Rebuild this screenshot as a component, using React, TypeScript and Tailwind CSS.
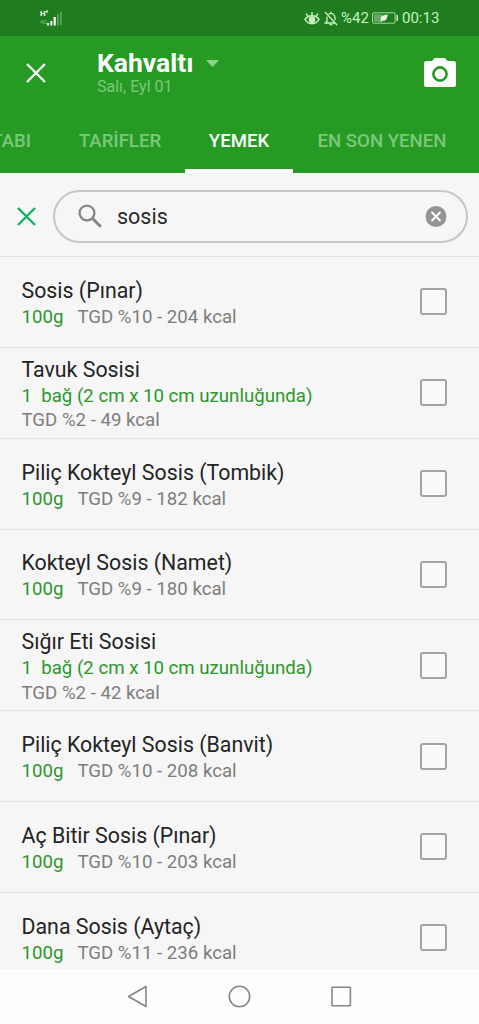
const foods = [
  { name: "Sosis (Pınar)", amount: "100g", info: "TGD %10 - 204 kcal" },
  {
    name: "Tavuk Sosisi",
    amount: "1  bağ (2 cm x 10 cm uzunluğunda)",
    info: "TGD %2 - 49 kcal",
    long: true,
  },
  {
    name: "Piliç Kokteyl Sosis (Tombik)",
    amount: "100g",
    info: "TGD %9 - 182 kcal",
  },
  {
    name: "Kokteyl Sosis (Namet)",
    amount: "100g",
    info: "TGD %9 - 180 kcal",
  },
  {
    name: "Sığır Eti Sosisi",
    amount: "1  bağ (2 cm x 10 cm uzunluğunda)",
    info: "TGD %2 - 42 kcal",
    long: true,
  },
  {
    name: "Piliç Kokteyl Sosis (Banvit)",
    amount: "100g",
    info: "TGD %10 - 208 kcal",
  },
  {
    name: "Aç Bitir Sosis (Pınar)",
    amount: "100g",
    info: "TGD %10 - 203 kcal",
  },
  {
    name: "Dana Sosis (Aytaç)",
    amount: "100g",
    info: "TGD %11 - 236 kcal",
  },
];

function StatusBar() {
  return (
    <div className="flex h-9 shrink-0 items-center justify-between bg-[#1f7d1f] pl-10 pr-[39px] text-[#c8f0c4]">
      <div className="flex h-4 w-6">
        <div className="flex w-[7px] flex-col text-[8px] leading-[8px] font-bold tracking-[-0.5px]">
          <span className="text-white">H⁺</span>
          <span className="text-[6px] opacity-40">4G</span>
        </div>
        <svg className="h-4 w-[15px]" viewBox="0 0 15 16" fill="currentColor">
          <path d="M0 13h2v2.500H0z" />
          <path d="M3.3 11h2v4.500h-2z" fill="#fff" />
          <path d="M6.600 7h2.200v8.500H6.600z" fill="#fff" />
          <path d="M10 4h1.800v11.500H10zM13 2h1.800v13.500H13z" opacity="0.35" />
        </svg>
      </div>
      <div className="flex items-center text-[15px]">
        <svg
          className="h-[15px] w-4"
          viewBox="0 0 16 15"
          fill="none"
          stroke="currentColor"
          strokeWidth="1.500"
        >
          <path d="M1 8.500C4 3.500 12 3.500 15 8.500C12 14 4 14 1 8.500z" />
          <circle cx="8" cy="8.700" r="2.600" fill="currentColor" />
          <path d="M8 4.500V1M4 5.200L2 2.600M12 5.200l2-2.600" />
        </svg>
        <svg
          className="ml-1 h-[15px] w-[14px]"
          viewBox="0 0 14 15"
          fill="none"
          stroke="currentColor"
          strokeWidth="1.300"
        >
          <path d="M4.500 3.200C8 1 11 3.500 11 7v2.200M3 5.500v4.800L1.300 12H11M5.500 13.700h3M7 2.300V.7M1 1l12 13" />
        </svg>
        <span className="ml-[3px] w-7 whitespace-nowrap">%42</span>
        <svg className="ml-[3px] h-3 w-[27px]" viewBox="0 0 27 12" fill="none">
          <rect
            x="0.600"
            y="0.800"
            width="22.500"
            height="10.400"
            rx="1"
            stroke="currentColor"
            strokeOpacity="0.8"
          />
          <path d="M2 2.200h8.500v7.600H2z" fill="currentColor" opacity="0.4" />
          <path
            d="M15.800 2.400C11 2.700 8 4.300 9 7.300L8.200 9.600h1.300l.7-1.200c3.500 1.400 5-1.800 5.600-6z"
            fill="#e6fbe2"
          />
          <path d="M24.500 3h1.500v6h-1.500z" fill="currentColor" />
        </svg>
        <span className="ml-[3px] w-[38px] whitespace-nowrap">00:13</span>
      </div>
    </div>
  );
}

function Header() {
  return (
    <div className="flex h-[137px] shrink-0 flex-col bg-[#259b24] text-white">
      <div className="flex h-[73px] items-center pl-[26px] pr-[22px]">
        <svg
          className="h-5 w-5"
          viewBox="0 0 20 20"
          stroke="currentColor"
          strokeWidth="2.300"
        >
          <path d="M1 1l18 18M19 1L1 19" />
        </svg>
        <div className="ml-[51px] flex flex-col pb-0.5">
          <div className="flex h-[30px] items-center">
            <span className="text-[26.500px] leading-[30px] font-bold">
              Kahvaltı
            </span>
            <svg
              className="ml-3 h-[7px] w-[13px]"
              viewBox="0 0 13 7"
              fill="#8fd28e"
            >
              <path d="M0 0h13L6.500 7z" />
            </svg>
          </div>
          <span className="text-[16px] leading-[17px] text-[#7cc87b]">
            Salı, Eyl 01
          </span>
        </div>
        <svg
          className="ml-auto h-[31px] w-[34px]"
          viewBox="0 0 34 31"
          fill="none"
        >
          <path
            d="M3.500 4H9l2.800-3h10L24.600 4h5.900a2.500 2.500 0 0 1 2.500 2.500v21a2.500 2.500 0 0 1-2.500 2.500h-27A2.500 2.500 0 0 1 1 27.500v-21A2.500 2.500 0 0 1 3.500 4z"
            fill="#fff"
          />
          <circle cx="17" cy="17" r="6.600" stroke="#259b24" strokeWidth="2.600" />
        </svg>
      </div>
      <div className="flex h-16 overflow-hidden text-[18.600px] font-medium text-[#7cc87b]">
        <div className="flex w-[55px] shrink-0 items-center justify-end pt-0.5 pr-6">
          TABI
        </div>
        <div className="flex w-[130px] shrink-0 items-center justify-center pt-0.5">
          TARİFLER
        </div>
        <div className="flex w-[108px] shrink-0 items-center justify-center border-b-4 border-white pt-1.5 text-white">
          YEMEK
        </div>
        <div className="flex w-[178px] shrink-0 items-center justify-center pt-0.5">
          EN SON YENEN
        </div>
      </div>
    </div>
  );
}

function SearchBar() {
  return (
    <div className="flex h-[84px] shrink-0 items-center border-b border-[#e2e3e4] pt-[3px] pr-[11px] pl-[17px]">
      <svg
        className="h-[19px] w-[19px]"
        viewBox="0 0 19 19"
        stroke="#17b060"
        strokeWidth="2.400"
      >
        <path d="M1 1l17 17M18 1L1 18" />
      </svg>
      <div className="ml-[17px] flex h-[53px] flex-1 items-center rounded-full border-2 border-[#c4c6c8] pr-[19px] pl-[23px]">
        <svg
          className="h-6 w-6"
          viewBox="0 0 24 24"
          fill="none"
          stroke="#858585"
        >
          <circle cx="9" cy="9" r="7.400" strokeWidth="2.300" />
          <path d="M14.300 14.300l8.500 8.500" strokeWidth="3" />
        </svg>
        <span className="ml-[15px] pt-0.5 text-[21.500px] text-[#2b2b2b]">
          sosis
        </span>
        <svg className="ml-auto h-[22px] w-[22px]" viewBox="0 0 22 22">
          <circle cx="11" cy="11.500" r="10.500" fill="#939393" />
          <path
            d="M6.500 7l9 9M15.500 7l-9 9"
            stroke="#fff"
            strokeWidth="2"
          />
        </svg>
      </div>
    </div>
  );
}

function NavBar() {
  return (
    <div className="flex h-[55px] shrink-0 items-center bg-[#fdfdfd]">
      <svg
        className="mx-auto h-6 w-[226px]"
        viewBox="0 0 226 24"
        fill="none"
        stroke="#858585"
        strokeWidth="1.600"
        strokeLinejoin="round"
      >
        <path d="M1.500 11.500L19 1.500v20z" />
        <circle cx="112.500" cy="11.500" r="10.200" />
        <rect x="205" y="2.300" width="18.400" height="18.400" rx="0.500" />
      </svg>
    </div>
  );
}

export default function App() {
  return (
    <div className="flex h-screen w-full flex-col overflow-hidden bg-[#f6f6f6] font-[Roboto,'Noto_Sans',sans-serif]">
      <StatusBar />
      <Header />
      <SearchBar />
      <div className="min-h-0 flex-1 overflow-hidden">
        {foods.map((food) => (
          <div
            key={food.name}
            className="flex h-[90.850px] items-center justify-between border-b border-[#e2e3e0] pr-8 pl-[21.500px]"
          >
            <div className="flex flex-col pt-[3px]">
              <span className="text-[21.350px] leading-[28px] text-[#242424]">
                {food.name}
              </span>
              <div
                className={
                  food.long
                    ? "flex flex-col text-[18.650px] leading-[24.500px] text-[#7d7d7d]"
                    : "flex gap-3.5 text-[18.650px] leading-[25px] text-[#7d7d7d]"
                }
              >
                <span className="whitespace-pre text-[#2d962c]">
                  {food.amount}
                </span>
                <span>{food.info}</span>
              </div>
            </div>
            <div className="size-[27px] rounded-[3px] border-2 border-[#a3a3a3] bg-[#f9f9f9]"></div>
          </div>
        ))}
      </div>
      <NavBar />
    </div>
  );
}
